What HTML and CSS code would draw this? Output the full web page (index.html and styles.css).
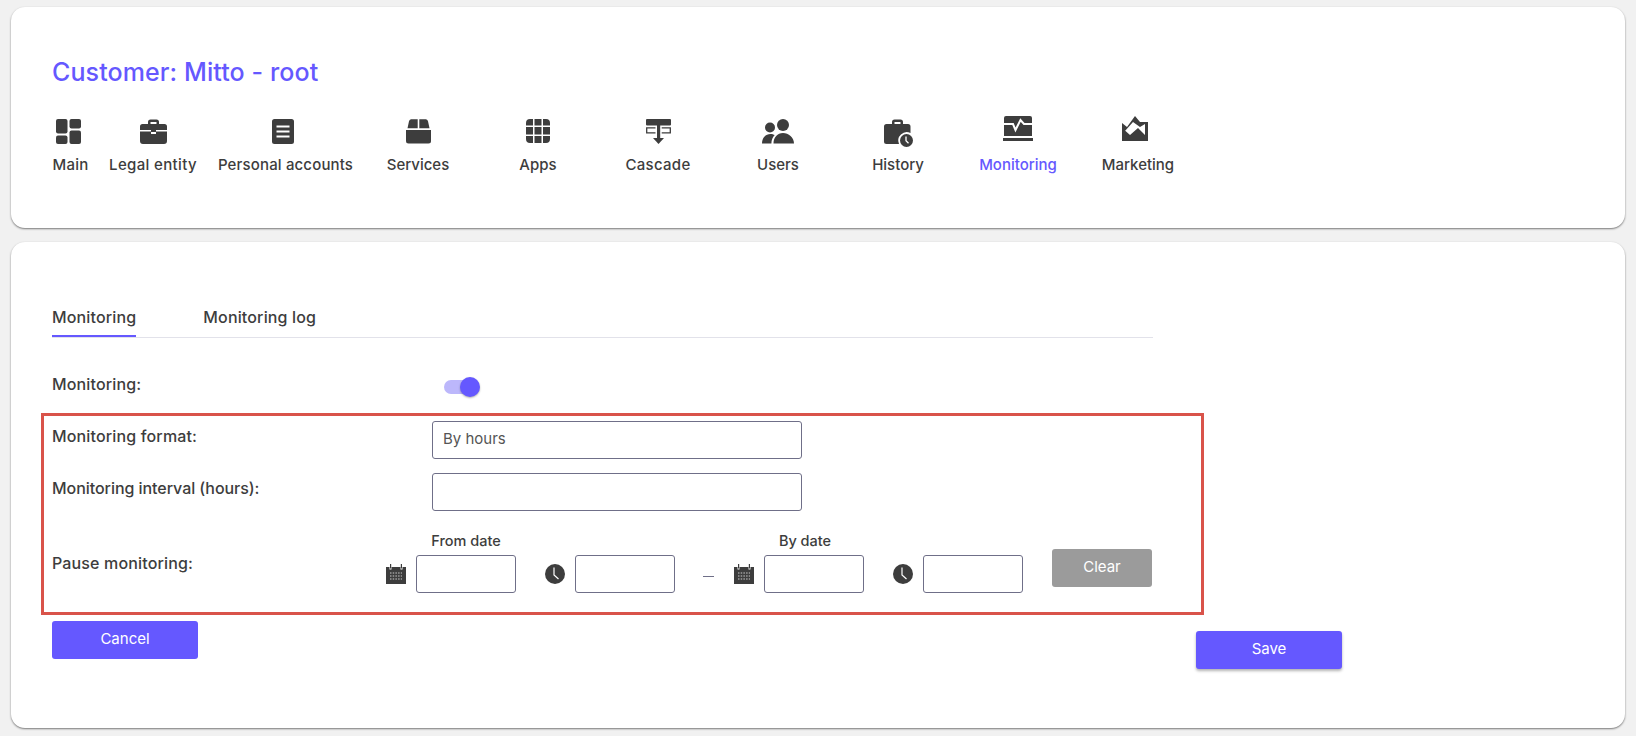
FILE: index.html
```html
<!DOCTYPE html>
<html lang="en">
<head>
    <meta charset="UTF-8">
    <title>Customer: Mitto - root</title>
    <link rel="stylesheet" href="styles.css">
</head>
<body>

    <!-- Customer header -->
    <div class="card header-card">
        <h1 class="customer-title">Customer: Mitto - root</h1>
        <div class="section-nav">
            <a class="nav-item nav-main">
                <span class="nav-icon">
                    <svg width="25" height="25" viewBox="0 0 25 25"><rect width="11.500" height="14.500" rx="2"/><rect y="16.500" width="11.500" height="8.500" rx="2"/><rect x="13.500" width="11.500" height="9.500" rx="2"/><rect x="13.500" y="11.500" width="11.500" height="13.500" rx="2"/></svg>
                </span>
                <span class="nav-label">Main</span>
            </a>
            <a class="nav-item nav-legal">
                <span class="nav-icon">
                    <svg width="27" height="25" viewBox="0 0 27 25"><path d="M8 5V3a2.500 2.500 0 0 1 2.500-2.500h6A2.500 2.500 0 0 1 19 3v2h5.500A2.500 2.500 0 0 1 27 7.500V11H16v2h-5v-2H0V7.500A2.500 2.500 0 0 1 2.500 5zM10.500 5h6V3h-6z" fill-rule="evenodd"/><path d="M0 12.500h11V15h5v-2.500h11V22a3 3 0 0 1-3 3H3a3 3 0 0 1-3-3z"/></svg>
                </span>
                <span class="nav-label">Legal entity</span>
            </a>
            <a class="nav-item nav-personal">
                <span class="nav-icon nav-icon-left">
                    <svg width="22" height="25" viewBox="0 0 22 25"><path fill-rule="evenodd" d="M2.500 0h17A2.500 2.500 0 0 1 22 2.500v20a2.500 2.500 0 0 1-2.500 2.500h-17A2.500 2.500 0 0 1 0 22.500v-20A2.500 2.500 0 0 1 2.500 0zM4.500 6.500v2h13v-2zM4.500 11.500v2h13v-2zM4.500 16.500v2h13v-2z"/></svg>
                </span>
                <span class="nav-label">Personal accounts</span>
            </a>
            <a class="nav-item nav-services">
                <span class="nav-icon">
                    <svg width="25" height="25" viewBox="0 0 25 25"><path d="M5 0h6.700v9H1.500L3 2a2.500 2.500 0 0 1 2-2zM13.300 0H20a2.500 2.500 0 0 1 2 2l1.500 7H13.300z" transform="translate(0 .2)"/><path d="M0 11h25v11a2.500 2.500 0 0 1-2.500 2.500h-20A2.500 2.500 0 0 1 0 22z"/></svg>
                </span>
                <span class="nav-label">Services</span>
            </a>
            <a class="nav-item">
                <span class="nav-icon">
                    <svg width="24" height="24" viewBox="0 0 24 24"><path d="M4 0h3v6.500H0V4a4 4 0 0 1 4-4zM8.500 0h7v6.500h-7zM17 0h3a4 4 0 0 1 4 4v2.500h-7zM0 8h7v7.500H0zM8.500 8h7v7.500h-7zM17 8h7v7.500h-7zM0 17h7v7H4a4 4 0 0 1-4-4zM8.500 17h7v7h-7zM17 17h7v3a4 4 0 0 1-4 4h-3z"/></svg>
                </span>
                <span class="nav-label">Apps</span>
            </a>
            <a class="nav-item nav-cascade">
                <span class="nav-icon">
                    <svg width="25" height="25" viewBox="0 0 25 25"><rect width="25" height="6.500" rx="1"/><rect x="11" y="6" width="3.200" height="14"/><path d="M7 19h11l-5.500 6z"/><path d="M9.500 8.800H.7v5h8.800M15.700 8.800h8.600v5h-8.600" fill="none" stroke="#3d3d3d" stroke-width="1.300"/></svg>
                </span>
                <span class="nav-label">Cascade</span>
            </a>
            <a class="nav-item">
                <span class="nav-icon">
                    <svg width="32" height="25" viewBox="0 0 32 25"><circle cx="8" cy="8.500" r="5"/><circle cx="21" cy="6" r="6"/><path d="M0 24.500C0 19 3.500 15 8.500 15c1.700 0 3 .4 4.200 1.100-2 2-3.300 5-3.300 8.400zM11.500 24.500c0-6 4-10.500 9.500-10.500s11 4.500 11 10.500z"/></svg>
                </span>
                <span class="nav-label">Users</span>
            </a>
            <a class="nav-item">
                <span class="nav-icon">
                    <svg width="29" height="28" viewBox="0 0 29 28"><path fill-rule="evenodd" d="M8 5V3a2.500 2.500 0 0 1 2.500-2.500h6A2.500 2.500 0 0 1 19 3v2h5a2.500 2.500 0 0 1 2.500 2.500V14a8.500 8.500 0 0 0-11.500 11H2.500A2.500 2.500 0 0 1 0 22.500v-15A2.500 2.500 0 0 1 2.500 5zM10.500 5h6V3h-6z"/><circle cx="22.500" cy="21.500" r="6.500"/><path d="M22 17.500v4.300l2.500 2.500" fill="none" stroke="#fff" stroke-width="1.300"/></svg>
                </span>
                <span class="nav-label">History</span>
            </a>
            <a class="nav-item active">
                <span class="nav-icon nav-icon-up">
                    <svg width="30" height="25" viewBox="0 0 30 25"><path d="M3 0h24a2 2 0 0 1 2 2v18H1V2a2 2 0 0 1 2-2z"/><rect y="22" width="30" height="3"/><path d="M1 8h9l2.500 6 5-10L21 8h8" fill="none" stroke="#fff" stroke-width="2"/></svg>
                </span>
                <span class="nav-label">Monitoring</span>
            </a>
            <a class="nav-item">
                <span class="nav-icon nav-icon-up nav-icon-left">
                    <svg width="26" height="25" viewBox="0 0 26 25"><path fill-rule="evenodd" d="M13 0l5 6h8v19H0V7l5 4zM3 15l.5 0 4.500 4 8-7 7 7V8l-5 3-7-5z"/></svg>
                </span>
                <span class="nav-label">Marketing</span>
            </a>
        </div>
    </div>

    <!-- Monitoring settings -->
    <div class="card settings-card">
        <div class="tabs">
            <div class="tab active">Monitoring</div>
            <div class="tab">Monitoring log</div>
        </div>

        <div class="toggle-row">
            <div class="field-label">Monitoring:</div>
            <div class="toggle"><span class="toggle-knob"></span></div>
        </div>

        <div class="highlight-box">
            <div class="form-row">
                <div class="field-label">Monitoring format:</div>
                <input class="text-input" type="text" value="By hours">
            </div>
            <div class="form-row">
                <div class="field-label label-tight">Monitoring interval (hours):</div>
                <input class="text-input" type="text">
            </div>
            <div class="pause-row">
                <div class="field-label pause-label">Pause monitoring:</div>
                <div class="picker">
                    <div class="picker-caption">From date</div>
                    <div class="picker-field">
                        <svg class="picker-icon" width="20" height="20" viewBox="0 0 20 20"><path d="M0 3h3.500v2.500h2V3h9v2.500h2V3H20v17H0z"/><rect x="4" y="0" width="1.200" height="4.500"/><rect x="14.800" y="0" width="1.200" height="4.500"/><path d="M4 9h12M4 12h12M4 15h12" stroke="#ccc" stroke-width="1.200" stroke-dasharray="1.500 1.200" fill="none"/></svg>
                        <input class="date-input" type="text">
                    </div>
                </div>
                <div class="picker">
                    <div class="picker-caption"></div>
                    <div class="picker-field">
                        <svg class="picker-icon" width="20" height="20" viewBox="0 0 20 20"><circle cx="10" cy="10" r="10"/><path d="M9 3.500V11l4.500 4" fill="none" stroke="#fff" stroke-width="1.200"/></svg>
                        <input class="date-input" type="text">
                    </div>
                </div>
                <div class="range-dash"></div>
                <div class="picker">
                    <div class="picker-caption by-date">By date</div>
                    <div class="picker-field">
                        <svg class="picker-icon" width="20" height="20" viewBox="0 0 20 20"><path d="M0 3h3.500v2.500h2V3h9v2.500h2V3H20v17H0z"/><rect x="4" y="0" width="1.200" height="4.500"/><rect x="14.800" y="0" width="1.200" height="4.500"/><path d="M4 9h12M4 12h12M4 15h12" stroke="#ccc" stroke-width="1.200" stroke-dasharray="1.500 1.200" fill="none"/></svg>
                        <input class="date-input" type="text">
                    </div>
                </div>
                <div class="picker">
                    <div class="picker-caption"></div>
                    <div class="picker-field">
                        <svg class="picker-icon" width="20" height="20" viewBox="0 0 20 20"><circle cx="10" cy="10" r="10"/><path d="M9 3.500V11l4.500 4" fill="none" stroke="#fff" stroke-width="1.200"/></svg>
                        <input class="date-input" type="text">
                    </div>
                </div>
                <button class="btn btn-clear">Clear</button>
            </div>
        </div>

        <div class="form-actions">
            <button class="btn">Cancel</button>
            <button class="btn btn-save">Save</button>
        </div>
    </div>

</body>
</html>
```

FILE: styles.css
```css
html, body {
    margin: 0;
    height: 100%;
    overflow: hidden;
}

body {
    padding: 7px 11px;
    box-sizing: border-box;
    background-color: #f1f1f1;
    color: #3d3d3d;
    font-family: 'Inter', 'Noto Sans', sans-serif;
    font-size: 15px;
    font-weight: 500;
    line-height: 20px;
}

.card {
    background-color: #fff;
    border-radius: 14px;
    box-shadow: 0 1px 2px rgba(0, 0, 0, 0.5);
    box-sizing: border-box;
}

.header-card {
    height: 221px;
    padding: 50px 41px 0;
}

.customer-title {
    margin: 0 0 32px;
    color: #6558ff;
    font-size: 25px;
    font-weight: 500;
    letter-spacing: 0.1px;
    line-height: 30px;
}

.section-nav {
    display: flex;
    gap: 20px;
}

.nav-item {
    display: flex;
    flex-direction: column;
    align-items: center;
    width: 100px;
    flex: none;
    white-space: nowrap;
}

.nav-main {
    width: 37px;
}

.nav-main .nav-icon {
    margin-right: 4px;
}

.nav-main .nav-label {
    letter-spacing: 0.25px;
}

.nav-legal {
    width: 88px;
    margin-right: 1px;
}

.nav-personal {
    width: 135px;
}

.nav-services {
    margin-left: -5px;
}

.nav-legal .nav-label {
    letter-spacing: 0.35px;
}

.nav-personal .nav-label {
    letter-spacing: 0.15px;
}

.nav-cascade .nav-label {
    letter-spacing: 0.3px;
}

.nav-icon {
    height: 28px;
    margin-bottom: 8px;
}

.nav-icon svg {
    display: block;
    fill: #3d3d3d;
}

.nav-icon-up svg {
    margin-top: -3px;
}

.nav-icon-left {
    margin-right: 6px;
}

.nav-item.active .nav-label {
    color: #6558ff;
}

.settings-card {
    height: 486px;
    margin-top: 14px;
    padding: 65px 41px 0;
}

.tabs {
    display: flex;
    gap: 67px;
    width: 1101px;
    height: 30px;
    border-bottom: 1px solid #e2e2ea;
    box-sizing: content-box;
    font-size: 16px;
    letter-spacing: 0.15px;
}

.tab {
    height: 29px;
}

.tab.active {
    height: 28px;
    border-bottom: 2px solid #6558ff;
}

.toggle-row {
    display: flex;
    margin-top: 36px;
    height: 39px;
}

.field-label {
    width: 380px;
    flex: none;
    font-size: 16px;
    letter-spacing: 0.15px;
}

.field-label.label-tight {
    letter-spacing: -0.05px;
}

.toggle {
    position: relative;
    width: 32px;
    height: 14px;
    margin: 6px 0 0 12px;
    border-radius: 7px;
    background-color: #bcb7fb;
}

.toggle-knob {
    position: absolute;
    top: -3px;
    right: -4px;
    width: 20px;
    height: 20px;
    border-radius: 50%;
    background-color: #6558ff;
    box-shadow: 0 1px 2px rgba(0, 0, 0, 0.3);
}

.highlight-box {
    width: 1163px;
    height: 202px;
    margin-left: -11px;
    padding: 5px 8px 0;
    border: 3px solid #d9534a;
    box-sizing: border-box;
}

.form-row {
    display: flex;
    margin-bottom: 14px;
}

.form-row .field-label {
    padding-top: 5px;
}

.text-input,
.date-input {
    height: 38px;
    border: 1px solid #6f6f88;
    border-radius: 3px;
    box-sizing: border-box;
    background-color: #fff;
    color: #555;
    font-family: inherit;
    font-size: 15px;
    font-weight: 400;
}

.text-input {
    width: 370px;
    padding: 0 10px 3px;
}

.date-input {
    width: 100px;
    padding: 0 8px;
}

.pause-row {
    display: flex;
    align-items: flex-start;
    margin-top: 20px;
}

.pause-label {
    width: 334px;
    padding-top: 22px;
}

.picker {
    display: flex;
    flex-direction: column;
    align-items: flex-end;
    margin-right: 29px;
}

.picker-caption {
    width: 100px;
    height: 20px;
    margin-bottom: 4px;
    font-size: 14.5px;
    text-align: center;
}

.by-date {
    transform: translateX(-9px);
}

.picker-field {
    display: flex;
    align-items: center;
    gap: 10px;
}

.picker-icon {
    fill: #3d3d3d;
    flex: none;
}

.range-dash {
    width: 11px;
    height: 1px;
    margin: 45px 20px 0 -1px;
    background-color: #6f6f88;
}

.btn {
    width: 146px;
    height: 38px;
    padding: 0 0 3px;
    border: none;
    border-radius: 3px;
    background-color: #6558ff;
    color: #fff;
    font-family: inherit;
    font-size: 15px;
    font-weight: 400;
}

.btn-clear {
    width: 100px;
    margin-top: 18px;
    background-color: #9b9b9b;
}

.form-actions {
    display: flex;
    justify-content: space-between;
    align-items: flex-start;
    width: 1290px;
    margin-top: 6px;
}

.btn-save {
    margin-top: 10px;
    box-shadow: 0 2px 3px rgba(0, 0, 0, 0.3);
}
```
